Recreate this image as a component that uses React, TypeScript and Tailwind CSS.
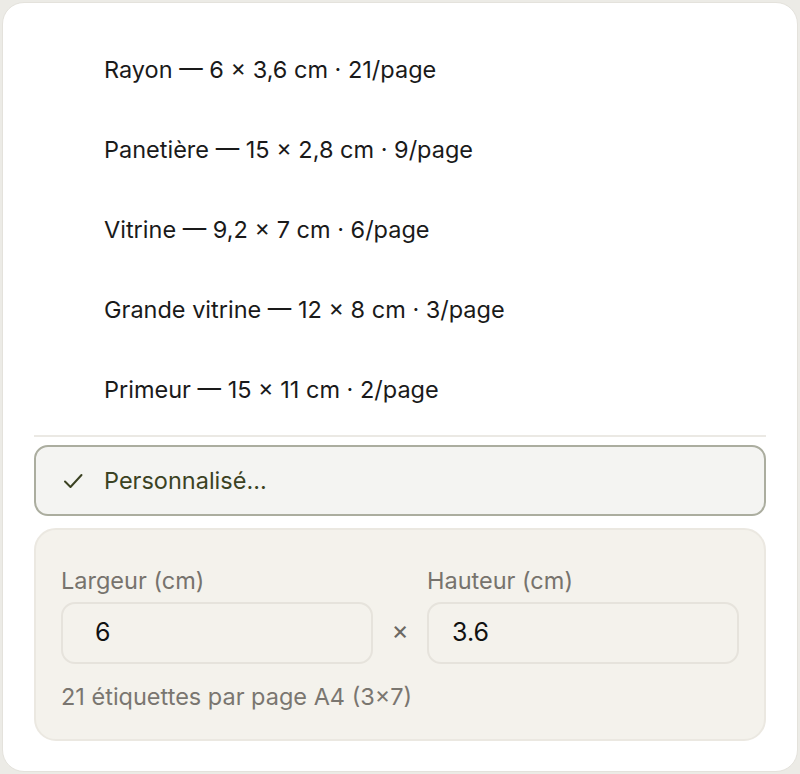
import React from "react";

const items = [
  "Rayon — 6 × 3,6 cm · 21/page",
  "Panetière — 15 × 2,8 cm · 9/page",
  "Vitrine — 9,2 × 7 cm · 6/page",
  "Grande vitrine — 12 × 8 cm · 3/page",
  "Primeur — 15 × 11 cm · 2/page",
];

export default function App() {
  return (
    <div
      className="w-[800px] h-[774px] bg-[#ecebe6] p-[2px]"
      style={{ fontFamily: "Inter, 'Noto Sans', sans-serif" }}
    >
      <div className="h-[770px] bg-white rounded-[22px] border border-[#e4e2dc] px-[31px] pt-[27px] flex flex-col">
        <ul className="flex flex-col">
          {items.map((t) => (
            <li
              key={t}
              className="h-[80px] flex items-center pl-[70px] text-[23.5px] text-[#1a1a1a]"
            >
              {t}
            </li>
          ))}
        </ul>
        <div className="h-[2px] bg-[#ebe9e4] mt-[5px]" />
        <div className="mt-[8px] h-[71px] rounded-[14px] border-2 border-[#abad9f] bg-[#f4f4f2] flex items-center pl-[27px] text-[23.5px] text-[#3b4223]">
          <svg width="20" height="20" viewBox="0 0 20 20" fill="none" stroke="#3b4223" strokeWidth="2" strokeLinecap="round" strokeLinejoin="round" className="mr-[21px]">
            <path d="M2 10.5l5.5 5.5L18.5 4" />
          </svg>
          Personnalisé...
        </div>
        <div className="mt-[12px] rounded-[22px] border-2 border-[#ebe8e1] bg-[#f4f2ec] px-[25px] pt-[38px] pb-[28px]">
          <div className="flex items-end gap-[16px]">
            <div className="w-[312px] flex flex-col">
              <label className="text-[23.5px] leading-[26px] text-[#77736d]">Largeur (cm)</label>
              <div className="mt-[8px] h-[62px] rounded-[14px] border-2 border-[#e6e3dc] flex items-center pl-[32px] text-[25px] text-[#111]">
                6
              </div>
            </div>
            <div className="w-[22px] h-[62px] flex items-center justify-center text-[26px] text-[#6b6964] pb-[8px]">×</div>
            <div className="w-[312px] flex flex-col">
              <label className="text-[23.5px] leading-[26px] text-[#77736d]">Hauteur (cm)</label>
              <div className="mt-[8px] h-[62px] rounded-[14px] border-2 border-[#e6e3dc] flex items-center pl-[23px] text-[25px] text-[#111]">
                3.6
              </div>
            </div>
          </div>
          <div className="mt-[19px] text-[23.5px] leading-[28px] text-[#7a7670]">
            21 étiquettes par page A4 (3×7)
          </div>
        </div>
      </div>
    </div>
  );
}
